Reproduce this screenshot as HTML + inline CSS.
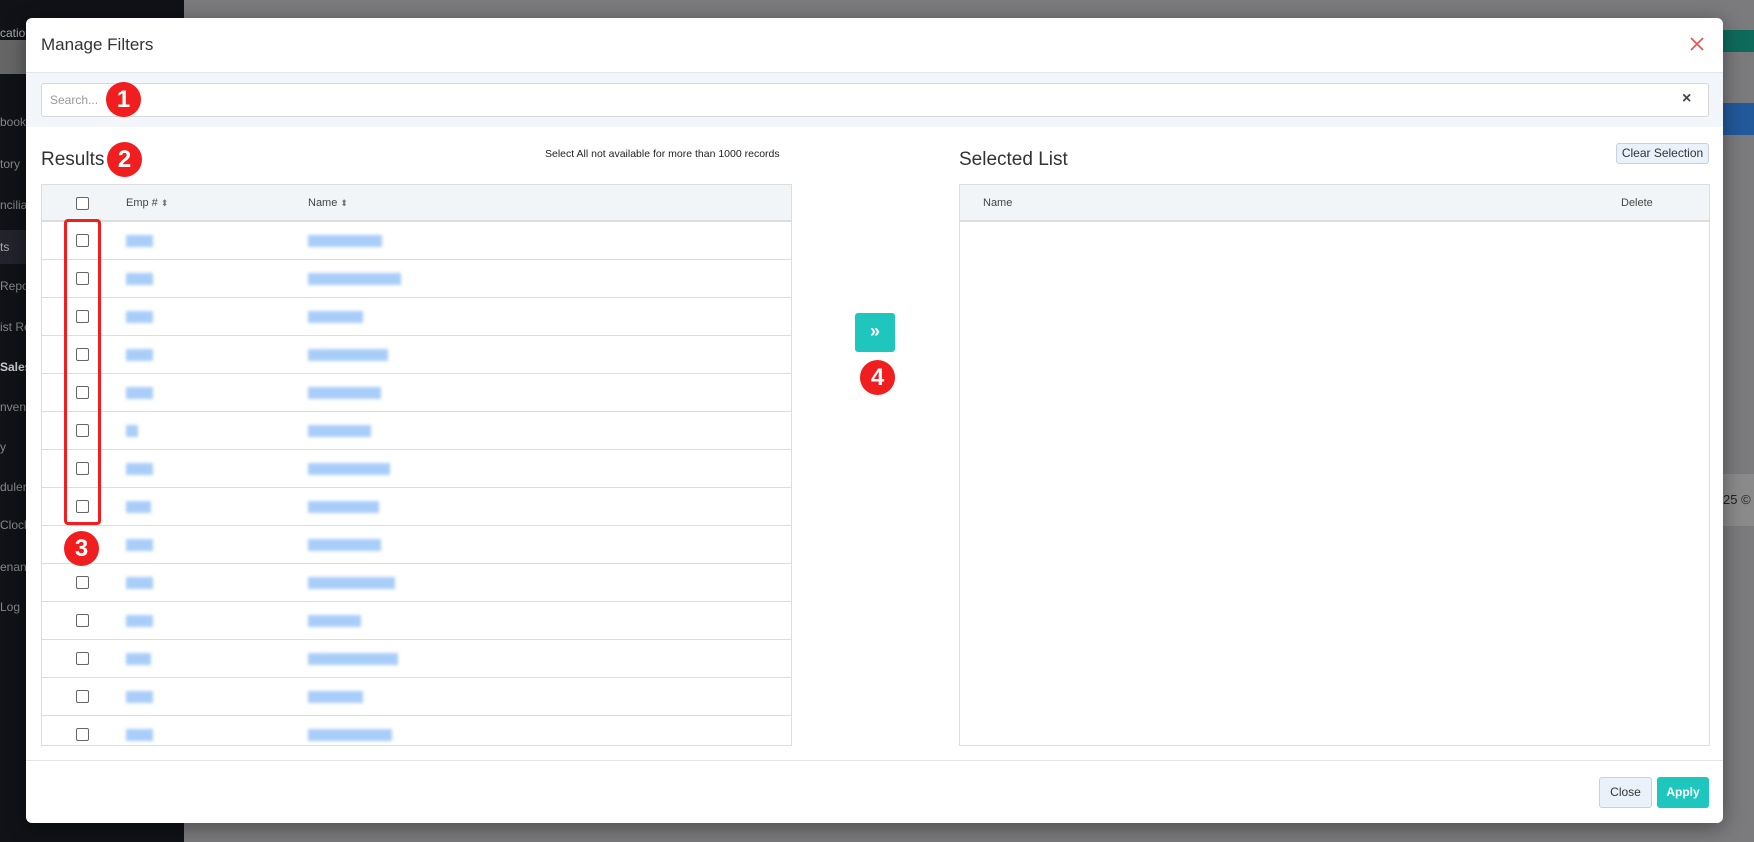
<!DOCTYPE html>
<html><head><meta charset="utf-8"><style>
*{box-sizing:border-box;margin:0;padding:0}
body{width:1754px;height:842px;overflow:hidden;font-family:"Liberation Sans",sans-serif;background:#7b7b7d;position:relative}
.side{position:absolute;left:0;top:0;width:184px;height:842px;background:#111217}
.side div{position:absolute;left:0;color:#888;font-size:12px}
.modal{position:absolute;left:26px;top:18px;width:1697px;height:805px;background:#fff;border-radius:6px;box-shadow:0 4px 20px rgba(0,0,0,.4)}
.abs{position:absolute}
.badge{position:absolute;width:35px;height:35px;border-radius:50%;background:#f01e1e;color:#fff;font-weight:bold;font-size:24px;text-align:center;line-height:35px}
.cb{position:absolute;width:13px;height:13px;border:1px solid #666;border-radius:2px;background:#fff}
.bl{position:absolute;height:12px;background:#a9cdf9;filter:blur(1.5px)}
.row{position:absolute;left:0;width:750px;height:38px;border-bottom:1px solid #ddd}
</style></head><body>
<div class="side">
<div style="top:26px;color:#aaa">cation</div>
<div style="top:40px;width:26px;height:34px;background:#666"></div>
<div style="top:115px">book</div><div style="top:157px">tory</div><div style="top:198px">nciliati</div>
<div style="top:230px;width:26px;height:34px;background:#23232c"></div>
<div style="top:240px;color:#aaa">ts</div><div style="top:279px">Repor</div><div style="top:320px">ist Re</div>
<div style="top:360px;color:#ccc;font-weight:bold">Sales</div><div style="top:400px">nvent</div><div style="top:440px">y</div>
<div style="top:480px">duler</div><div style="top:518px">Clock</div><div style="top:560px">enanc</div><div style="top:600px">Log</div>
</div>
<div class="abs" style="left:1723px;top:30px;width:31px;height:22px;background:#0e6b5c"></div>
<div class="abs" style="left:1723px;top:103px;width:31px;height:32px;background:#22599a"></div>
<div class="abs" style="left:1723px;top:474px;width:31px;height:52px;background:#8a8a8a;font-size:13px;line-height:52px;color:#222">25 ©</div>
<div class="modal">
 <div class="abs" style="left:15px;top:17px;font-size:17px;color:#333">Manage Filters</div>
 <svg class="abs" style="left:1663px;top:18px" width="16" height="16" viewBox="0 0 16 16"><path d="M2 2L14 14M14 2L2 14" stroke="#e8514e" stroke-width="1.6"/></svg>
 <div class="abs" style="left:0;top:54px;width:1697px;height:55px;background:#f2f5f9;border-top:1px solid #e3e6ea"></div>
 <div class="abs" style="left:15px;top:65px;width:1668px;height:34px;background:#fff;border:1px solid #d8d8d8;border-radius:3px"></div>
 <div class="abs" style="left:24px;top:75px;font-size:12px;color:#999">Search...</div>
 <div class="abs" style="left:1656px;top:72px;font-size:16px;font-weight:bold;color:#444">×</div>
 <div class="badge" style="left:80px;top:64px">1</div>
 <div class="abs" style="left:15px;top:131px;font-size:19px;color:#333">Results</div>
 <div class="badge" style="left:81px;top:124px">2</div>
 <div class="abs" style="left:519px;top:130px;font-size:10.5px;color:#222">Select All not available for more than 1000 records</div>
 <div class="abs" style="left:15px;top:166px;width:751px;height:562px;border:1px solid #ddd;overflow:hidden">
  <div class="abs" style="left:0;top:0;width:751px;height:37px;background:#f2f5f8;border-bottom:2px solid #ddd"></div>
  <div class="cb" style="left:34px;top:12px"></div>
  <div class="abs" style="left:84px;top:12px;font-size:11px;color:#444">Emp # <span style="font-size:9px;color:#777">⬍</span></div>
  <div class="abs" style="left:266px;top:12px;font-size:11px;color:#444">Name <span style="font-size:9px;color:#777">⬍</span></div>
  <div style="position:absolute;left:0;top:37px">
   <div class="row" style="top:0"><div class="cb" style="left:34px;top:12px"></div><div class="bl" style="left:84px;top:13px;width:27px"></div><div class="bl" style="left:266px;top:13px;width:74px"></div></div>
   <div class="row" style="top:38px"><div class="cb" style="left:34px;top:12px"></div><div class="bl" style="left:84px;top:13px;width:27px"></div><div class="bl" style="left:266px;top:13px;width:93px"></div></div>
   <div class="row" style="top:76px"><div class="cb" style="left:34px;top:12px"></div><div class="bl" style="left:84px;top:13px;width:27px"></div><div class="bl" style="left:266px;top:13px;width:55px"></div></div>
   <div class="row" style="top:114px"><div class="cb" style="left:34px;top:12px"></div><div class="bl" style="left:84px;top:13px;width:27px"></div><div class="bl" style="left:266px;top:13px;width:80px"></div></div>
   <div class="row" style="top:152px"><div class="cb" style="left:34px;top:12px"></div><div class="bl" style="left:84px;top:13px;width:27px"></div><div class="bl" style="left:266px;top:13px;width:73px"></div></div>
   <div class="row" style="top:190px"><div class="cb" style="left:34px;top:12px"></div><div class="bl" style="left:84px;top:13px;width:12px"></div><div class="bl" style="left:266px;top:13px;width:63px"></div></div>
   <div class="row" style="top:228px"><div class="cb" style="left:34px;top:12px"></div><div class="bl" style="left:84px;top:13px;width:27px"></div><div class="bl" style="left:266px;top:13px;width:82px"></div></div>
   <div class="row" style="top:266px"><div class="cb" style="left:34px;top:12px"></div><div class="bl" style="left:84px;top:13px;width:25px"></div><div class="bl" style="left:266px;top:13px;width:71px"></div></div>
   <div class="row" style="top:304px"><div class="bl" style="left:84px;top:13px;width:27px"></div><div class="bl" style="left:266px;top:13px;width:73px"></div></div>
   <div class="row" style="top:342px"><div class="cb" style="left:34px;top:12px"></div><div class="bl" style="left:84px;top:13px;width:27px"></div><div class="bl" style="left:266px;top:13px;width:87px"></div></div>
   <div class="row" style="top:380px"><div class="cb" style="left:34px;top:12px"></div><div class="bl" style="left:84px;top:13px;width:27px"></div><div class="bl" style="left:266px;top:13px;width:53px"></div></div>
   <div class="row" style="top:418px"><div class="cb" style="left:34px;top:12px"></div><div class="bl" style="left:84px;top:13px;width:25px"></div><div class="bl" style="left:266px;top:13px;width:90px"></div></div>
   <div class="row" style="top:456px"><div class="cb" style="left:34px;top:12px"></div><div class="bl" style="left:84px;top:13px;width:27px"></div><div class="bl" style="left:266px;top:13px;width:55px"></div></div>
   <div class="row" style="top:494px;border:0"><div class="cb" style="left:34px;top:12px"></div><div class="bl" style="left:84px;top:13px;width:27px"></div><div class="bl" style="left:266px;top:13px;width:84px"></div></div>
  </div>
 </div>
 <div class="abs" style="left:38px;top:201px;width:37px;height:306px;border:3px solid #f01e1e;border-radius:4px"></div>
 <div class="badge" style="left:38px;top:513px">3</div>
 <div class="abs" style="left:829px;top:295px;width:40px;height:39px;background:#1ec6bd;border-radius:3px;color:#fff;font-size:18px;text-align:center;line-height:36px;font-weight:bold">»</div>
 <div class="badge" style="left:834px;top:342px">4</div>
 <div class="abs" style="left:933px;top:131px;font-size:19px;color:#333">Selected List</div>
 <div class="abs" style="left:1590px;top:125px;width:93px;height:21px;background:#e9f1fb;border:1px solid #c8d0da;border-radius:3px;font-size:12px;color:#333;text-align:center;line-height:19px">Clear Selection</div>
 <div class="abs" style="left:933px;top:166px;width:751px;height:562px;border:1px solid #ddd">
  <div class="abs" style="left:0;top:0;width:749px;height:37px;background:#f2f5f8;border-bottom:2px solid #ddd"></div>
  <div class="abs" style="left:23px;top:12px;font-size:11px;color:#444">Name</div>
  <div class="abs" style="left:661px;top:12px;font-size:11px;color:#444">Delete</div>
 </div>
 <div class="abs" style="left:0;top:742px;width:1697px;height:1px;background:#e5e5e5"></div>
 <div class="abs" style="left:1573px;top:759px;width:53px;height:31px;background:#e9f1fb;border:1px solid #c8d0da;border-radius:3px;font-size:12px;color:#333;text-align:center;line-height:29px">Close</div>
 <div class="abs" style="left:1631px;top:759px;width:52px;height:31px;background:#1ec6bd;border-radius:3px;font-size:12px;font-weight:bold;color:#fff;text-align:center;line-height:31px">Apply</div>
</div>
</body></html>
